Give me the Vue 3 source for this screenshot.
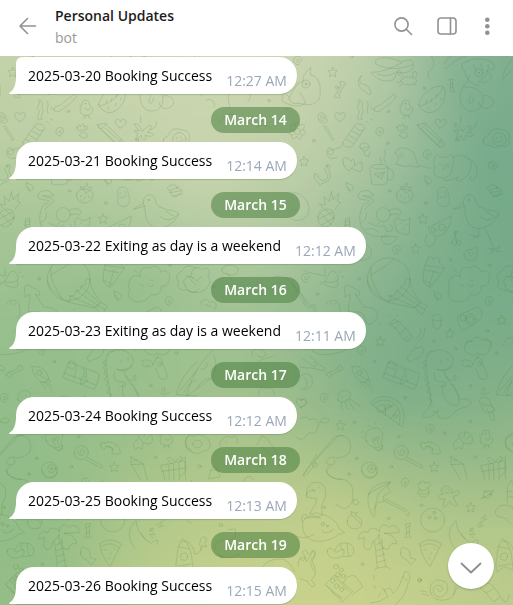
<script setup>
import { onMounted, ref } from 'vue'

const entries = [
  { id: 1, text: '2025-03-20 Booking Success', time: '12:27 AM' },
  { id: 2, day: 'March 14', text: '2025-03-21 Booking Success', time: '12:14 AM' },
  { id: 3, day: 'March 15', text: '2025-03-22 Exiting as day is a weekend', time: '12:12 AM' },
  { id: 4, day: 'March 16', text: '2025-03-23 Exiting as day is a weekend', time: '12:11 AM' },
  { id: 5, day: 'March 17', text: '2025-03-24 Booking Success', time: '12:12 AM' },
  { id: 6, day: 'March 18', text: '2025-03-25 Booking Success', time: '12:13 AM' },
  { id: 7, day: 'March 19', text: '2025-03-26 Booking Success', time: '12:15 AM' },
]

// Small doodles scattered over the wallpaper tile, in tile units (three per pixel)
const stars = [[998, 216], [912, 484], [1269, 656], [1247, 746], [1505, 960], [1350, 1000], [1141, 1024], [1021, 1276], [1303, 1401], [1412, 1522]]
const hearts = [[1020, 350], [1322, 370], [905, 1208]]
const swirls = [[1142, 394], [1284, 462], [895, 180], [1192, 748], [918, 832], [1470, 902], [1088, 1050], [975, 1192], [1293, 1286], [1218, 1446]]
const leaves = [[1284, 542], [1050, 562], [1314, 888]]
const dots = [
  [1010, 262], [1165, 334], [1273, 264], [1056, 170], [941, 422], [1163, 430], [1372, 420], [807, 302],
  [1168, 573], [1277, 609], [1351, 779], [1077, 836], [952, 882], [1469, 795], [1462, 993], [1301, 1024],
  [1123, 1085], [1367, 1046], [1489, 1059], [1412, 1157], [1215, 1193], [1063, 1267], [1196, 1310],
  [1411, 1264], [1333, 1299], [1070, 1375], [1174, 1400], [1047, 1422], [1426, 1372], [972, 1522],
  [1166, 1555], [1264, 1516], [1087, 1693], [1259, 1740], [785, 1400], [665, 1670], [640, 860],
]
const tiles = [-960, 0, 960, 1920, 2880]

const gradient = ref(null)

// Four colour spots blended by distance, with a slight swirl around the centre
function paintGradient(canvas) {
  const size = 50
  const ctx = canvas.getContext('2d')
  const image = ctx.createImageData(size, size)
  const spots = [
    { x: 0.4, y: 0.2, rgb: [217, 220, 184] },
    { x: 0.75, y: 0.6, rgb: [107, 165, 135] },
    { x: 0.6, y: 0.85, rgb: [213, 216, 141] },
    { x: 0.25, y: 0.4, rgb: [136, 184, 132] },
  ]
  let offset = 0
  for (let row = 0; row < size; row++) {
    for (let col = 0; col < size; col++) {
      const dx = col / size - 0.5
      const dy = row / size - 0.5
      const swirl = 0.35 * Math.hypot(dx, dy)
      const theta = swirl * swirl * 6.4
      const x = Math.min(1, Math.max(0, 0.5 + dx * Math.cos(theta) - dy * Math.sin(theta)))
      const y = Math.min(1, Math.max(0, 0.5 + dx * Math.sin(theta) + dy * Math.cos(theta)))
      const weights = spots.map((s) => Math.max(0, 0.9 - Math.hypot(x - s.x, y - s.y)) ** 4)
      const total = weights.reduce((a, b) => a + b, 0)
      for (let c = 0; c < 3; c++) {
        image.data[offset++] = spots.reduce((sum, s, i) => sum + s.rgb[c] * weights[i], 0) / total
      }
      image.data[offset++] = 255
    }
  }
  ctx.putImageData(image, 0, 0)
}

onMounted(() => paintGradient(gradient.value))
</script>

<template>
  <div class="chat">
    <header class="bar">
      <button class="icon-button" type="button" aria-label="Back">
        <svg width="24" height="24" viewBox="0 0 24 24"><path d="M19.500 11H4.500M11.500 3.500L4 11L11.500 18.500" /></svg>
      </button>
      <div class="peer">
        <h1 class="title">Personal Updates</h1>
        <p class="status">bot</p>
      </div>
      <nav class="actions">
        <button class="icon-button" type="button" aria-label="Search">
          <svg width="24" height="24" viewBox="0 0 24 24"><circle cx="10.500" cy="9.500" r="6.600" /><path d="M15.300 14.300L20.500 19.500" /></svg>
        </button>
        <button class="icon-button" type="button" aria-label="Toggle side panel">
          <svg width="24" height="24" viewBox="0 0 24 24"><rect x="5" y="3" width="18" height="16" rx="3" /><path d="M17.500 3V19" /></svg>
        </button>
        <button class="icon-button" type="button" aria-label="More actions">
          <svg class="solid" width="24" height="24" viewBox="0 0 24 24"><circle cx="12.300" cy="4.700" r="2.300" /><circle cx="12.300" cy="11.200" r="2.300" /><circle cx="12.300" cy="17.700" r="2.300" /></svg>
        </button>
      </nav>
    </header>

    <main class="conversation">
      <canvas ref="gradient" class="gradient" width="50" height="50"></canvas>
      <svg class="doodles" aria-hidden="true">
        <defs>
          <path id="d-star" d="M0-14L4-5 14-4 7 4 9 14 0 9-9 14-7 4-14-4-4-5Z" />
          <path id="d-heart" d="M-2 14C-20 2-19-10-10-12-4-13-1-9-1-5 3-14 12-14 15-8 19 2 8 10-2 14Z" />
          <path id="d-swirl" d="M2 1C0-5-6-1-4 4-1 10 10 7 9-2 7-16-12-14-14-1-15 9-7 15 2 14" />
          <path id="d-leaf" d="M-2 16V8C-14 4-10-8-12-16-4-8 12-8 10 3 9 9 4 11-2 8L-6-2" />
          <path id="d-bone" d="M-14 5L12-7C8-18 20-20 20-12 30-12 27 0 18-1L-10 12C-8 22-18 24-20 15-30 14-26 4-14 5Z" />
          <g id="d-chick">
            <path d="M-14-12C-16-32 12-30 8-10 22-6 22 18 2 20-18 22-24 6-16-2L-21-8ZM-4-2C-2 8 10 6 10-2M-5 20V27L-10 28M5 20V26L10 28" />
            <circle cx="-4" cy="-15" r="1" />
          </g>
          <g id="tile">
            <use v-for="(p, i) in stars" :key="'s' + i" href="#d-star" :x="p[0]" :y="p[1]" />
            <use v-for="(p, i) in hearts" :key="'h' + i" href="#d-heart" :x="p[0]" :y="p[1]" />
            <use v-for="(p, i) in swirls" :key="'w' + i" href="#d-swirl" :x="p[0]" :y="p[1]" />
            <use v-for="(p, i) in leaves" :key="'l' + i" href="#d-leaf" :x="p[0]" :y="p[1]" />
            <circle v-for="(p, i) in dots" :key="'d' + i" :cx="p[0]" :cy="p[1]" r="4" />
            <use href="#d-chick" x="1220" y="326" />
            <use href="#d-chick" x="1460" y="1316" />
            <g transform="translate(1018 268) rotate(-35)"><use href="#d-bone" /></g>
            <use href="#d-bone" x="1003" y="1112" />

            <!-- Top band: party guests, animals and snacks -->
            <g transform="translate(600 150)">
              <path d="M528 42C518 20 560 16 606 36 628 24 644 32 640 50 636 66 610 72 592 66L580 90C548 102 516 78 514 66 540 70 580 52 606 38M528 42C560 58 592 62 640 44M532 72C550 80 570 78 584 68" />
              <path d="M602 92C606 78 642 76 650 92 648 108 610 110 602 92ZM606 84L592 70C586 58 606 60 602 68L612 80M638 82L640 66C650 60 656 74 646 82M602 96L592 98M608 102L598 108M642 102L650 108" />
              <path d="M694 18C706 36 704 52 692 60 680 68 682 80 690 86M484 78C474 92 480 102 494 104 508 106 508 120 514 130L506 134C494 120 476 118 476 100 474 88 476 82 484 78ZM522 178C522 166 540 170 548 160 556 148 572 146 580 132L590 138C578 156 568 164 554 172 544 184 524 192 522 178Z" />
              <path d="M480 150C494 160 482 170 488 180 494 190 478 196 486 208L476 210C466 196 486 188 474 178 468 168 484 162 476 152ZM502 154C510 170 496 176 504 190M514 172L516 178M500 214L506 220M512 208L518 210" />
              <path d="M656 164C662 132 702 102 730 110 750 142 718 188 688 188 672 186 660 176 656 164ZM660 168C690 160 716 140 730 112M680 150L678 158M696 144L694 152M710 132L708 140M686 172L684 178M708 160L706 166M724 144L722 150" />
              <path d="M732 42C740 18 764 14 780 10M798 20C778 18 762 38 736 56M800 36C806 24 852 24 866 32 884 34 888 54 876 60 868 62 864 52 864 46M802 36C782 34 780 54 794 62 796 86 812 104 838 106M866 66C888 90 858 100 834 96 846 88 854 82 862 68M820 44L828 62M842 42L848 60M808 76C806 90 800 98 790 110 770 142 784 174 804 182 838 190 854 160 848 140 844 124 822 106 792 112M850 138C872 130 892 158 874 170 858 180 838 176 838 158M812 134L806 156C812 164 822 156 820 144" />
              <circle cx="836" cy="68" r="12" /><circle cx="836" cy="68" r="2" /><circle cx="862" cy="62" r="2" />
              <path d="M748 88L762 88 758 96 758 116 764 126 750 126 752 96ZM752 100L760 104M750 110L758 114M652 224L676 220 734 278C738 290 722 294 716 288L660 236ZM652 224L662 238 680 222M668 242L718 290M676 234L728 282M724 268L714 282" />
              <path d="M594 234C590 226 598 222 602 230 606 218 616 222 612 232 620 226 628 230 620 238 610 238 598 246 592 238 586 232 590 228 594 234M600 258C594 246 616 240 620 252 628 268 604 266 600 258Z" />
              <path d="M764 222C774 218 784 236 788 244 812 214 824 228 802 248 830 246 826 266 796 256 800 278 782 272 784 256L766 270 774 250C758 244 758 240 778 242 770 234 764 228 764 222ZM782 198V218M830 214C832 234 814 238 810 240" />
              <path d="M850 270C848 262 868 260 868 250 872 234 900 234 912 242 926 240 932 260 926 268 934 286 914 294 902 286 890 302 878 288 866 286 858 288 846 280 850 270Z" />
              <circle cx="898" cy="268" r="20" /><path d="M888 272C894 282 904 276 908 268M890 262V266M902 260V264" />
              <path d="M356 208C344 186 376 180 378 204 392 216 364 230 356 208ZM361 209C374 220 378 198 366 196 354 198 366 210 370 202M376 226L402 268 398 272 370 228" />
              <path d="M428 278L468 222C480 220 496 226 494 236L456 290C442 294 428 290 428 278ZM464 230C476 240 478 244 490 242M456 244L480 256M448 256L470 268M438 268L460 280M428 286C410 304 384 294 384 308 390 322 408 310 396 296 378 280 368 340 412 322" />
              <path d="M480 292C476 274 506 274 508 292 504 304 486 308 480 292ZM492 304L494 316 506 320 510 306M484 296L506 290M442 270" />
              <path d="M586 308C588 292 612 286 640 306L656 350M586 308C594 320 602 330 586 342L618 350C636 340 640 356 656 350 672 342 676 358 692 354M596 318L606 308M600 322L612 316" />
              <path d="M430 340C424 318 440 318 454 334 462 316 466 340 462 348 480 334 490 332 486 344 486 352 488 364 482 364 470 366 462 358 456 352 448 372 434 356 430 340Z" />
              <path d="M344 372C348 370 356 374 356 384 374 402 388 384 382 374 376 362 368 358 384 344M384 344C400 348 382 356 388 366 396 376 390 398 366 400L360 406 356 398C346 394 340 384 344 372M382 354C390 344 374 340 380 350M510 350C512 342 560 340 564 350L562 398C556 406 522 406 516 402ZM516 352C530 360 554 358 564 350M564 356C578 352 586 374 576 388 568 396 564 386 562 384M524 372L554 366 544 386 534 380ZM534 380L548 370M538 322C550 330 536 334 544 342M554 300C562 318 544 320 556 336" />
              <path d="M704 354C700 334 702 316 712 314L722 322 740 322 752 312C764 320 760 344 756 354 758 384 724 390 706 378 702 370 700 360 704 354ZM758 322C782 310 812 318 814 344 814 364 798 388 778 392 768 396 766 386 776 380 754 392 734 394 730 388M806 326C828 336 840 366 824 386 814 396 804 388 814 378M718 344H728M738 342H748M732 348L736 352 728 358M738 346L746 352" />
              <path d="M872 338C878 328 888 336 886 340 896 336 896 352 888 352 886 362 874 360 876 354 864 358 860 346 868 344 864 336 872 332 872 338ZM906 86C914 58 928 32 952 12M908 88C922 74 938 54 950 44" />
              <circle cx="880" cy="347" r="4" />
              <path d="M310 92C306 74 322 64 332 52 334 62 330 70 332 76 350 74 364 102 360 122 366 150 344 166 322 164L294 160C278 164 264 152 268 142L292 102ZM268 142L250 124 246 154C270 166 296 176 318 158L300 128M254 178L274 172" />
              <circle cx="318" cy="102" r="12" /><circle cx="318" cy="102" r="3" />
              <path d="M282 244C260 230 278 216 286 230 282 210 302 212 298 228 312 216 320 230 306 240 324 242 318 258 304 254 310 272 290 270 290 258 280 276 270 262 278 254 260 256 266 242 282 244Z" /><circle cx="292" cy="244" r="9" />
              <path d="M90 170C76 136 90 118 112 112L122 98 132 112C150 112 156 132 146 152M86 122L82 112M102 112L98 100M60 216C74 192 96 186 108 200M170 232C184 222 202 226 216 234M188 212C204 202 206 230 190 236M-20 118C-4 108 10 124 4 138M20 150C34 142 50 160 42 172" />
            </g>

            <!-- Upper middle: cat, heron, balloon and cloud -->
            <g transform="translate(900 540)">
              <path d="M220 44C206 22 172 32 174 50 176 64 208 56 206 64 206 70 190 70 186 82 174 112 176 150 210 164 232 174 250 166 264 170M220 44C222 54 202 46 188 46 188 56 220 48 220 64 214 74 200 74 196 88M182 128C194 122 202 112 198 98M206 128L230 140 238 128M198 148C218 142 224 150 236 156" />
              <circle cx="250" cy="104" r="21" />
              <path d="M266 92C278 84 298 84 302 94 306 108 290 106 288 100L272 106M284 124L292 112 302 120 318 122 330 112 328 140 328 160C314 168 302 160 290 152ZM300 132L304 128M316 138L320 134M306 144L312 148M246 172C256 164 282 170 292 172 282 188 266 198 252 190 244 186 242 178 246 172M238 142C248 130 262 142 258 154 284 158 280 140 270 132" />
              <path d="M290 42C294 24 320 20 338 38 344 54 326 74 308 68 294 64 288 54 290 42ZM306 28L300 20 314 22 320 8 324 22 336 22 328 32 318 40 312 30ZM302 46V50M314 52V56M326 48V52M306 60V62M412 34C416 14 444 18 444 38 450 58 452 78 432 80 414 78 408 66 414 56ZM420 36V40M434 34V38M420 50C426 56 436 52 438 44M562 24C574 8 594 14 590 26 608 24 610 38 596 44 588 58 572 48 572 36ZM568 32L596 20M570 38L604 32M578 48L608 42" />
              <path d="M54 110C64 76 104 84 102 106 104 130 82 146 68 138 56 134 52 122 54 110ZM70 86L58 72 76 74 72 50 88 64 94 34 100 60 116 40 112 64 122 68 104 88M58 96L94 134M76 88L102 116M54 118L98 96M64 136L104 112" />
              <path d="M490 68C488 42 520 34 526 60 530 82 542 80 562 90 580 90 592 96 596 102 586 126 566 138 548 144 520 154 494 126 496 96ZM490 68L460 88 496 78M540 108C552 124 578 124 596 102M556 94L582 108M536 146V170L510 164M536 170L520 172M556 144L584 210M584 208L566 204 580 214 570 220M584 208L602 198 588 214 602 214" /><circle cx="506" cy="60" r="2" />
              <path d="M386 142L454 108C454 132 438 164 414 170 400 168 382 156 386 142ZM382 162C374 174 370 198 388 200 400 198 408 188 406 172M456 188C456 172 472 180 470 188 466 200 456 196 456 188ZM470 184C482 174 488 190 478 194 472 198 468 192 470 184M464 178L466 152M470 178L462 156 474 154 466 164" /><circle cx="426" cy="142" r="10" /><circle cx="400" cy="150" r="7" />
              <path d="M136 140V118L148 114 150 140ZM136 126L150 122M134 136L150 132M492 224C494 208 508 210 514 208L526 200C534 208 532 224 528 236 514 248 492 242 492 224ZM508 218V222M518 216V220M510 226L516 228M184 190C204 190 218 208 214 222 210 238 192 246 176 238M198 206V210M186 206V210M-20 38C6 36 34 70 26 98 20 118-8 128-24 118" />
              <circle cx="266" cy="298" r="64" />
              <path d="M202 300C206 328 236 350 262 366L344 384M330 300C334 330 344 342 362 366M262 366C276 362 270 352 268 346 282 352 290 340 288 330 300 336 304 326 302 318 314 322 318 312 316 300 322 292 330 294 330 300M270 348L348 382M290 334L354 376M304 320L360 370M214 260C204 286 228 332 246 354M280 236C270 254 240 268 214 284M346 382L362 366 382 378 366 404ZM352 376L374 388" />
              <path d="M370 278L376 254C382 248 372 246 384 240 380 226 402 228 400 238 412 226 422 238 418 248L434 264 392 322C380 318 370 308 370 300ZM374 256L432 264M374 270L416 278M370 300L396 314M402 268L388 320" />
              <path d="M450 298C460 280 474 286 480 292 476 270 492 258 508 264 524 252 542 264 542 276 562 264 576 288 566 300 566 318 550 320 544 318 546 342 524 350 514 342 500 370 460 372 448 352 442 334 454 330 446 320ZM480 314L490 318M512 300L518 302M504 314C508 324 522 320 520 312M472 278L462 270M558 330" />
              <path d="M596 304C584 290 592 278 606 274 612 256 632 252 648 266M596 304C586 322 602 334 620 330 642 344 650 334 656 326M620 288L640 294M630 298L650 316M70 308C82 300 84 280 94 274 108 270 118 290 112 300L114 316C108 328 76 320 70 308ZM74 304C88 310 102 308 112 300M118 278L124 274M126 290H132M64 306L62 314" />
              <path d="M134 320L144 314 178 334C184 350 170 346 166 342 178 358 184 374 192 382 214 378 240 394 232 410 228 424 214 436 204 432 192 422 196 410 188 400 176 392 162 398 144 394 148 372 150 356 150 342L136 350ZM0 336L26 384 42 374 48 386M78 374C88 354 116 358 118 378 122 400 118 410 112 414M94 368V372M106 370V374" />
              <path d="M268 430L284 418 300 428 334 462C344 474 322 490 312 480L288 446ZM270 436L296 424M284 446L302 430M300 460L316 444M314 476L332 464M284 386V390M268 404L272 408M292 404L290 410M236 434H240M258 432H262M362 442C366 456 358 470 348 476M374 444C376 462 366 476 358 482M396 414C398 396 424 402 426 414L420 442C410 454 398 442 400 434ZM398 420L426 422" />
              <path d="M474 408L528 382C540 382 544 388 546 404 546 422 520 430 494 450 484 450 478 438 474 428Z" /><circle cx="512" cy="418" r="16" /><circle cx="512" cy="418" r="9" /><circle cx="490" cy="414" r="9" />
              <path d="M496 494C500 480 510 486 516 482 524 468 544 468 548 482 564 476 580 488 572 502M610 496C614 472 636 464 648 484M10 270C26 280 52 282 76 288L74 266" />
            </g>

            <!-- Lower middle: dinosaur, pizza, bulb and fishing rod -->
            <g transform="translate(900 1020)">
              <path d="M378 70C376 38 402 28 424 30 448 34 468 56 456 74 448 90 428 90 410 88M410 88C426 98 450 90 458 76M432 92C438 120 450 130 464 138M404 96C398 118 410 130 432 124 446 134 434 144 418 138M440 108C446 124 456 128 460 114 464 96 474 112 464 122M378 70C380 110 392 150 392 172 396 194 382 208 368 226 372 238 396 232 400 224L414 216C406 244 452 238 462 218 478 200 500 206 514 192 514 178 494 172 482 180 472 154 462 140 452 132M430 130C420 164 440 200 474 196 482 188 474 162 462 142M398 214C404 216 412 216 418 210M378 60L370 66 376 76 368 82 376 92 372 100 380 108 374 120 384 126 378 138 388 144 382 158 394 164 386 176 396 182 390 194 398 202M378 48L384 40 388 34 398 34M424 60V68M444 54V62" />
              <path d="M322 52C330 48 334 28 352 24 376 10 374 32 366 44 356 58 340 56 328 66ZM350 26L344 18M494 30C490 8 508 0 518 4M494 30C504 46 526 50 530 38 548 54 572 38 568 24 582 8 566-6 554-4M486 62C504 54 516 66 520 72L528 56C534 48 546 54 546 64L562 108C562 118 544 122 540 114L526 84M488 66C484 82 502 86 508 74M502 74C506 88 524 78 516 70M534 44L530 56" /><circle cx="539" cy="72" r="6" />
              <path d="M250 110L266 66 356 100C362 108 346 146 342 148L256 116ZM268 72C264 58 276 60 280 68 288 66 290 76 284 82M250 98L350 136M290 82L282 114M306 86C322 90 306 104 314 110 298 112 306 124 300 130 318 136 312 120 324 124 314 112 322 108 318 90M264 82L284 88" />
              <path d="M156 80C182 76 202 92 206 116 198 128 186 130 178 122 166 110 156 94 156 80ZM182 124C186 140 198 138 198 146M190 124L218 152M198 126L216 140M206 116L210 128M180 106L202 120M114 180C110 154 128 150 140 152 154 158 154 164 148 172 148 184 120 192 114 180ZM122 184C132 196 116 202 130 210M132 182C144 192 130 202 148 208M140 178C158 188 148 196 164 210M148 176C162 182 166 194 182 198M126 168V172M138 164V168" />
              <circle cx="178" cy="98" r="7" />
              <path d="M214 188C230 164 264 164 292 182 314 196 316 240 306 260L218 196ZM222 192C242 174 270 178 286 194 304 208 300 234 298 254M244 214L282 196M256 226L258 192M272 236L292 208" /><circle cx="244" cy="206" r="12" /><circle cx="268" cy="198" r="5" /><circle cx="286" cy="228" r="6" />
              <path d="M198 302C190 276 212 260 232 264 252 272 250 288 244 304L248 326C240 336 232 334 226 324 214 320 202 314 198 302ZM226 324L248 318M232 330L248 324M226 318L216 298C220 288 228 296 226 302L232 290C240 290 238 298 232 302L238 318M226 248V252M206 256L208 260M188 274L192 276M186 292H190M252 262L248 266" />
              <circle cx="304" cy="338" r="21" /><path d="M304 340C294 332 308 322 314 334 316 350 294 350 294 336M322 352L366 376C372 382 366 386 360 382L316 358M362 314C358 304 376 306 374 310 386 302 412 306 420 332 426 346 408 342 406 340 394 350 396 332 398 326 388 318 380 318 378 320 374 336 362 326 362 314ZM378 320C390 318 396 324 400 332" />
              <path d="M460 318C456 306 472 302 476 294 476 276 496 270 506 280 520 286 520 304 512 312 502 314 498 306 490 308L486 328 476 322 468 326ZM480 294L488 306M494 278L492 292M508 288L500 298M626 330C610 312 614 286 640 278M636 334L626 324" />
              <path d="M12 400L98 296C118 280 150 284 152 320 152 348 124 354 108 354 90 346 74 360 80 370 94 382 112 368 102 358M12 400C6 408 14 410 20 404L48 370 42 364 104 300 112 288 128 286M38 376C38 364 54 366 52 376 50 386 38 386 38 376M92 376C60 400 100 420 126 418M452 350L454 374 482 420M452 350L490 372 502 420M454 374L490 372M460 362L470 360" />
              <circle cx="208" cy="390" r="24" /><circle cx="215" cy="386" r="12" /><circle cx="215" cy="386" r="4" />
              <path d="M544 376L614 362 616 384 546 394ZM550 394L554 420M614 384L618 420M566 374L568 420M580 372L582 420M596 368L598 420M576 372C554 356 562 344 578 360L588 364C598 342 616 350 600 364M590 164C592 130 622 92 650 66M590 164L650 168M600 152L650 92M612 158C620 138 630 130 648 120M538 182C540 166 568 168 570 186L584 210C582 220 552 220 548 208ZM550 196C556 192 562 200 568 196 574 198 580 204 584 210M566 218L574 240C580 244 586 238 582 232L576 214M548 188V192M562 206V210M544 164C542 152 550 144 552 142 558 152 552 160 550 164M556 162L568 158" />
              <path d="M0 110C12 92 40 104 36 120 44 144 12 154 0 144M12 112C24 122 24 132 16 144M0 180C12 174 24 184 16 194L0 204M0 236C16 224 28 236 28 240 48 228 64 250 52 264 52 282 32 282 26 278 18 294 0 306-10 292M62 246C64 232 84 228 88 242 88 250 68 250 62 246ZM36 32C60 52 92 44 130 34L144 18M0 80C16 88 30 80 42 86L72 92C80 86 70 78 60 76L30 48M8 56L44 80C52 76 48 68 42 66" />
            </g>

            <!-- Bottom: swan, umbrella, palm and rocket -->
            <g transform="translate(900 1410)">
              <path d="M20 72C16 44 48 28 66 42 84 56 76 86 70 96 60 110 68 128 66 134M20 72C22 88 38 84 48 84 54 102 36 112 30 132M22 136C8 126 0 148 8 158 6 182 14 204 40 212 72 218 102 206 114 194L134 188C128 180 118 182 116 172 108 150 82 134 58 132 48 122 40 138 30 130M14 146C24 136 44 150 66 136M36 58L44 62M56 50L60 54M92 184C82 192 70 190 66 180M102 176L92 184" />
              <circle cx="68" cy="162" r="5" /><circle cx="82" cy="168" r="3" />
              <path d="M78 0C84 18 98 24 116 28 144 24 160 46 158 68 160 86 158 102 140 114 126 118 118 106 108 104M160 90C170 84 180 94 174 102 160 108 156 98 160 90M142 154C142 138 152 138 156 134L152 124 164 130 172 126 166 138C188 142 190 162 178 174 154 182 142 170 142 154ZM158 136C162 150 176 148 182 160M186 0C194 26 226 30 232 8" />
              <path d="M206 72C212 52 240 34 272 36L262 52 272 66 250 78 252 94 234 98C222 108 228 128 222 140 208 124 200 98 206 72ZM206 72C226 58 248 48 272 36M218 120C230 110 230 82 234 72L272 36M256 86L320 120C334 132 328 140 318 134M252 92L316 126" />
              <path d="M354 50C350 40 360 40 360 42 358 28 376 34 374 40 390 30 398 44 384 54L388 66C388 80 368 86 358 76 352 70 354 62 360 60ZM362 60C370 66 384 58 382 52M360 68C370 76 386 70 388 64M428 72C412 54 440 40 450 52 460 62 454 68 454 70L474 62C484 68 472 78 460 78L462 86 472 106C466 112 456 104 450 94L436 110C426 112 430 98 436 86L420 88C410 80 420 74 428 72ZM430 58L434 62M442 54L446 58M436 68C444 72 450 66 450 62" />
              <ellipse cx="562" cy="73" rx="12" ry="12" /><path d="M552 80C534 92 548 84 574 72 586 60 580 58 572 64M552 64C568 66 564 76 574 74M508 184C526 178 524 172 510 176L524 194 508 192 520 204M530 166L546 154 538 172 552 166M540 148L556 136 550 152 562 146" />
              <circle cx="398" cy="150" r="36" /><circle cx="388" cy="142" r="4" /><circle cx="402" cy="128" r="4" /><circle cx="406" cy="144" r="4" />
              <path d="M238 184C224 170 206 172 204 188 184 178 174 196 176 208L194 202 190 228C204 250 216 234 216 218 226 210 234 202 238 192 232 218 246 240 266 238 268 218 280 220 290 222 290 202 268 190 252 190L298 188C296 162 274 164 266 172 256 156 236 168 238 184ZM222 212C230 242 228 270 232 294L258 290C250 260 248 230 244 206M230 224L248 216M230 242L252 234M232 260L254 252M232 278L256 270M232 294L222 300M258 290L270 296M222 316V330M222 346L226 356" />
              <path d="M318 162L332 160 328 168 328 192 332 202 316 202 320 194ZM320 174L330 168M318 190L330 184M302 250C300 234 308 226 318 236 334 238 328 252 332 264L348 268 334 284C326 282 326 270 318 268 308 266 302 258 302 250ZM360 222C372 206 404 206 424 222L390 290C376 272 360 246 360 222ZM364 230C380 218 402 218 416 234M372 240L380 238M390 252L396 248M386 268L390 262M402 234L406 238" />
              <path d="M82 244C82 228 98 236 106 246 114 248 124 236 132 240 134 256 124 264 102 264 90 264 82 254 82 244ZM106 240C108 226 122 214 142 220 166 222 166 254 152 258L128 260M124 222C120 230 124 240 130 240M142 220C142 232 142 248 148 258M0 262C6 278 18 272 14 256 4 250 8 242 16 240L26 254 40 240C52 248 46 262 34 266L44 292C50 312 42 322 34 330L44 344C40 358 26 346 24 334L0 326M76 342L104 316 158 364 128 396ZM80 346L126 388M104 322L148 364M130 340C136 320 154 314 166 318L188 350 158 374M94 364L104 374M112 374L124 384" />
              <circle cx="108" cy="290" r="7" /><circle cx="124" cy="300" r="6" /><circle cx="114" cy="314" r="7" /><circle cx="130" cy="318" r="6" /><circle cx="98" cy="332" r="7" /><circle cx="110" cy="348" r="7" /><circle cx="126" cy="358" r="6" />
              <path d="M210 398C236 400 250 386 264 380L252 360 270 354 280 370C302 350 302 330 314 306 330 300 334 326 324 340 320 366 306 388 286 404M246 352L256 366M308 320L322 332M236 380L242 370M392 370C384 340 406 324 426 332 446 334 448 362 434 374 424 386 402 382 400 364 398 346 424 338 428 356 424 370 408 364 414 356M392 370C404 398 446 396 462 374L466 350M460 374L472 352M362 362L380 366M366 372L386 376" /><circle cx="359" cy="331" r="6" />
              <path d="M464 236C442 204 442 176 468 152 472 188 488 204 514 220 534 200 540 216 530 222M484 190L496 208M588 282C592 250 592 226 608 206 624 220 634 240 636 270L640 300 612 290 592 306ZM594 230L628 236M596 288L632 282M536 346C552 336 568 334 582 352L612 394C620 402 624 384 628 374M540 352C550 370 564 372 580 356M556 366L580 396 600 382M648 134C636 122 640 108 628 108 610 98 582 114 586 132 596 144 618 142 620 148L634 162M622 98V48L634 32 644 50V96M622 64H648M626 80H648" /><circle cx="612" cy="260" r="11" />
            </g>

            <!-- Left strip of the tile -->
            <g transform="translate(540 765)">
              <path d="M16 92C0 76 24 62 34 64 32 40 52 30 64 44 84 30 94 50 84 66 98 76 88 106 56 112 32 114 16 104 16 92ZM36 66L50 78 66 64M64 148C58 132 82 128 90 142 110 134 114 156 102 164M76 148L92 156M126 42C136 26 164 26 174 42 176 60 152 64 142 56 128 56 122 50 126 42ZM142 56L156 76M280 66C300 60 322 66 338 88L376 152M338 88L408 170" />
              <path d="M20 424C28 380 52 330 98 286M20 424L94 370C110 354 112 318 100 300M52 400C60 380 74 374 90 370M78 324C90 332 72 344 64 342M216 300C210 280 240 276 256 292 262 306 238 314 232 300M232 320C252 308 276 310 280 300M236 418C234 396 252 394 260 402 276 396 284 406 282 418" />
            </g>
            <g transform="translate(540 1275)">
              <path d="M18 64C8 36 32 26 44 34 46 20 88 36 88 50 98 70 76 82 68 78 52 94 28 82 18 64ZM38 56C44 40 66 44 66 58 62 74 42 70 38 56ZM0 108L16 96 18 138 0 154M86 160L92 136 112 134 120 154ZM92 136C94 122 110 122 112 134M120 64C118 34 146 30 156 38 168 24 178 42 170 54M138 48L142 52M230 60L246 32 262 42 306 106 296 126M246 66L278 92M372 148L410 88M190 170C196 150 220 150 218 166M6 350C20 340 44 364 44 388 62 384 68 370 58 358 62 350 60 340 68 336 80 334 84 346 74 352L80 366 68 362 64 376M106 376C98 350 128 340 144 348L166 336V312L146 314M110 384C126 402 150 402 178 388M352 334C366 342 388 336 404 328M368 290C378 270 402 268 420 280M380 220C374 194 396 194 406 200M248 440C242 420 270 400 304 402 322 404 334 420 344 440M356 424C350 404 366 392 376 398L380 410 400 376C410 392 398 406 390 412L402 440" />
              <circle cx="58" cy="124" r="5" /><circle cx="122" cy="300" r="5" />
            </g>
          </g>
        </defs>
        <g class="ink" transform="scale(0.33333) translate(0 -168)">
          <use v-for="x in tiles" :key="x" href="#tile" :x="x" />
        </g>
      </svg>

      <ol class="messages">
        <template v-for="entry in entries" :key="entry.id">
          <li v-if="entry.day" class="day">{{ entry.day }}</li>
          <li class="bubble" :class="{ continued: !entry.day }">
            <span class="text">{{ entry.text }}</span>
            <time class="time">{{ entry.time }}</time>
            <svg class="tail" width="8" height="18" viewBox="0 0 8 18" aria-hidden="true">
              <path d="M8 0V18H1C0 18-.2 17 .7 16.500C5 14 7 9 7 0Z" />
            </svg>
          </li>
        </template>
      </ol>

      <button class="jump" type="button" aria-label="Go to bottom">
        <svg width="26" height="26" viewBox="0 0 26 26"><path d="M3.500 10.500L13 19.500L22.500 10.500" /></svg>
      </button>
    </main>
  </div>
</template>

<style>
body {
  margin: 0;
}
</style>

<style scoped>
.chat {
  display: flex;
  flex-direction: column;
  min-height: 100vh;
  font-family: "Open Sans", "Noto Sans", sans-serif;
  font-size: 14px;
  color: #000;
}

.bar {
  display: flex;
  align-items: center;
  box-sizing: border-box;
  height: 56px;
  padding: 0 14px 2px 16px;
  background: #fff;
}

.icon-button {
  display: flex;
  padding: 0;
  border: 0;
  background: none;
  cursor: pointer;
}

.icon-button svg {
  fill: none;
  stroke: #929292;
  stroke-width: 1.6;
  stroke-linecap: round;
  stroke-linejoin: round;
}

.icon-button .solid {
  fill: #929292;
  stroke: none;
}

.peer {
  flex: 1;
  min-width: 0;
  padding-left: 15px;
}

.title,
.status {
  margin: 0;
  font-size: 14px;
  line-height: 22px;
}

.title {
  font-weight: 600;
  color: #1c1c1c;
}

.status {
  color: #999;
}

.actions {
  display: flex;
  gap: 18px;
}

.conversation {
  position: relative;
  flex: 1;
  overflow: hidden;
}

.gradient,
.doodles {
  position: absolute;
  inset: 0;
  width: 100%;
  height: 100%;
}

.ink {
  fill: none;
  stroke: #4a8049;
  stroke-opacity: 0.2;
  stroke-width: 3;
  stroke-linecap: round;
  stroke-linejoin: round;
}

.messages {
  position: relative;
  display: flex;
  flex-direction: column;
  align-items: flex-start;
  margin: 0;
  padding: 1px 2px 1px 16px;
  list-style: none;
}

.day {
  align-self: center;
  margin: 13px 16px 9px 0;
  padding: 0 13px;
  border-radius: 13px;
  background: rgba(74, 128, 64, 0.55);
  color: #fff;
  font-weight: 600;
  line-height: 26px;
}

.bubble {
  position: relative;
  display: flex;
  align-items: flex-end;
  gap: 14px;
  box-sizing: border-box;
  height: 37px;
  padding: 0 10px 0 12px;
  border-radius: 18px 18px 18px 0;
  background: #fff;
  box-shadow: 0 1px 1px rgba(90, 130, 80, 0.35);
}

.continued {
  border-top-left-radius: 6px;
}

.text {
  line-height: 37px;
}

.time {
  color: #9ba8b7;
  line-height: 26px;
}

.tail {
  position: absolute;
  right: 100%;
  bottom: 0;
  margin-right: -1px;
  fill: #fff;
}

.jump {
  position: absolute;
  right: 19px;
  bottom: 16px;
  display: flex;
  align-items: center;
  justify-content: center;
  width: 46px;
  height: 46px;
  padding: 0;
  border: 0;
  border-radius: 50%;
  background: #fff;
  box-shadow: 0 1px 2px rgba(70, 100, 60, 0.4);
  cursor: pointer;
}

.jump svg {
  fill: none;
  stroke: #8c8c8c;
  stroke-width: 1.8;
  stroke-linecap: round;
  stroke-linejoin: round;
}
</style>
